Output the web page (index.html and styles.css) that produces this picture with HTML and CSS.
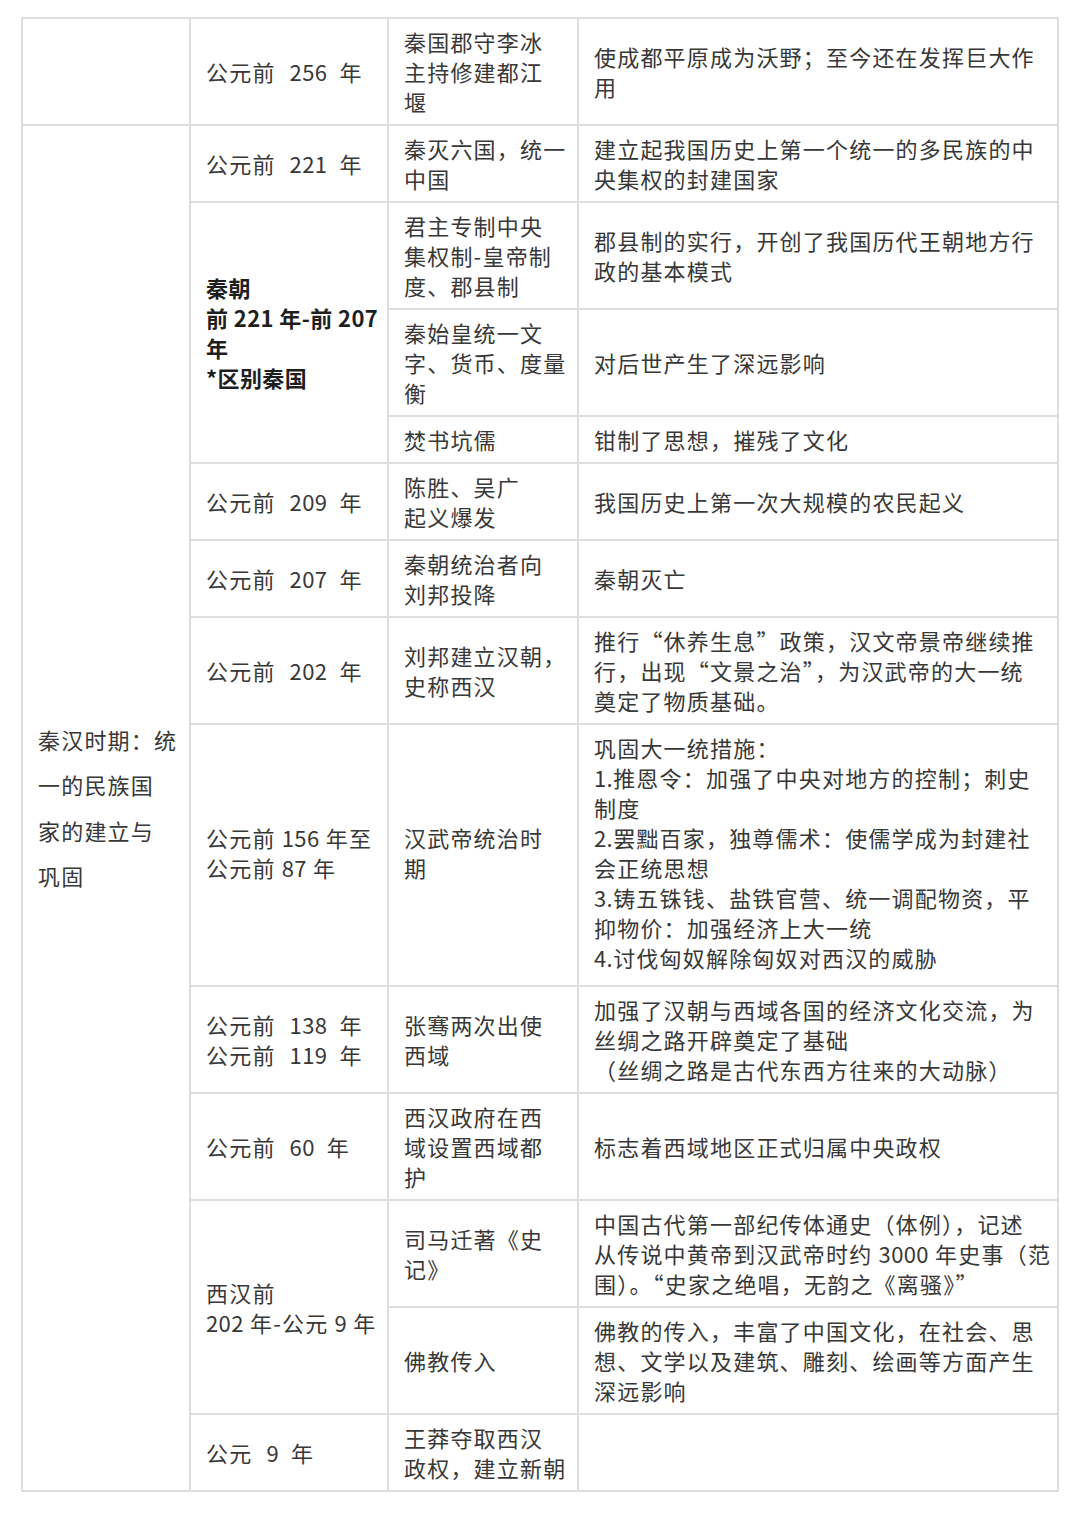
FILE: index.html
```html
<!DOCTYPE html>
<html lang="zh-CN">
<head>
<meta charset="utf-8">
<link rel="stylesheet" href="styles.css">
</head>
<body>
<table class="tbl">
  <colgroup>
    <col class="c1"><col class="c2"><col class="c3"><col class="c4">
  </colgroup>
  <tr>
    <td></td>
    <td>公元前<span class="num wide">256</span>年</td>
    <td>秦国郡守李冰<br>主持修建都江<br>堰</td>
    <td>使成都平原成为沃野；至今还在发挥巨大作<br>用</td>
  </tr>
  <tr>
    <td rowspan="14" class="period">秦汉时期：统<br>一的民族国<br>家的建立与<br>巩固</td>
    <td>公元前<span class="num wide">221</span>年</td>
    <td>秦灭六国，统一<br>中国</td>
    <td>建立起我国历史上第一个统一的多民族的中<br>央集权的封建国家</td>
  </tr>
  <tr>
    <td rowspan="3" class="dyn">秦朝<br>前 <span class="num">221</span> 年-前 <span class="num">207</span><br>年<br>*区别秦国</td>
    <td>君主专制中央<br>集权制-皇帝制<br>度、郡县制</td>
    <td>郡县制的实行，开创了我国历代王朝地方行<br>政的基本模式</td>
  </tr>
  <tr>
    <td>秦始皇统一文<br>字、货币、度量<br>衡</td>
    <td>对后世产生了深远影响</td>
  </tr>
  <tr>
    <td>焚书坑儒</td>
    <td>钳制了思想，摧残了文化</td>
  </tr>
  <tr>
    <td>公元前<span class="num wide">209</span>年</td>
    <td>陈胜、吴广<br>起义爆发</td>
    <td>我国历史上第一次大规模的农民起义</td>
  </tr>
  <tr>
    <td>公元前<span class="num wide">207</span>年</td>
    <td>秦朝统治者向<br>刘邦投降</td>
    <td>秦朝灭亡</td>
  </tr>
  <tr>
    <td>公元前<span class="num wide">202</span>年</td>
    <td>刘邦建立汉朝，<br>史称西汉</td>
    <td>推行“休养生息”政策，汉文帝景帝继续推<br>行，出现“文景之治”，为汉武帝的大一统<br>奠定了物质基础。</td>
  </tr>
  <tr class="tall">
    <td>公元前 <span class="num">156</span> 年至<br>公元前 <span class="num">87</span> 年</td>
    <td>汉武帝统治时<br>期</td>
    <td>巩固大一统措施：<br><span class="num">1.</span>推恩令：加强了中央对地方的控制；刺史<br>制度<br><span class="num">2.</span>罢黜百家，独尊儒术：使儒学成为封建社<br>会正统思想<br><span class="num">3.</span>铸五铢钱、盐铁官营、统一调配物资，平<br>抑物价：加强经济上大一统<br><span class="num">4.</span>讨伐匈奴解除匈奴对西汉的威胁</td>
  </tr>
  <tr>
    <td>公元前<span class="num wide">138</span>年<br>公元前<span class="num wide">119</span>年</td>
    <td>张骞两次出使<br>西域</td>
    <td>加强了汉朝与西域各国的经济文化交流，为<br>丝绸之路开辟奠定了基础<br>（丝绸之路是古代东西方往来的大动脉）</td>
  </tr>
  <tr>
    <td>公元前<span class="num wide">60</span>年</td>
    <td>西汉政府在西<br>域设置西域都<br>护</td>
    <td>标志着西域地区正式归属中央政权</td>
  </tr>
  <tr>
    <td rowspan="2">西汉前<br><span class="num">202</span> 年-公元 <span class="num">9</span> 年</td>
    <td>司马迁著《史<br>记》</td>
    <td>中国古代第一部纪传体通史（体例），记述<br>从传说中黄帝到汉武帝时约 <span class="num">3000</span> 年史事（范<br>围）。“史家之绝唱，无韵之《离骚》”</td>
  </tr>
  <tr>
    <td>佛教传入</td>
    <td>佛教的传入，丰富了中国文化，在社会、思<br>想、文学以及建筑、雕刻、绘画等方面产生<br>深远影响</td>
  </tr>
  <tr>
    <td>公元<span class="num wide">9</span>年</td>
    <td>王莽夺取西汉<br>政权，建立新朝</td>
    <td></td>
  </tr>
</table>
</body>
</html>
```

FILE: styles.css
```css
html, body {
  background: #ffffff;
}
body {
  margin: 17px 0 0 21px;
  font-family: "Noto Sans CJK SC", "Noto Sans", sans-serif;
  font-size: 22px;
  color: #383838;
}
.tbl {
  border-collapse: collapse;
  table-layout: fixed;
  width: 1036px;
}
.c1 { width: 168px; }
.c2 { width: 198px; }
.c3 { width: 190px; }
.c4 { width: 480px; }
.tbl td {
  border: 2px solid #dedede;
  padding: 7px 14px 8px 15px;
  line-height: 30px;
  letter-spacing: 1.2px;
  vertical-align: middle;
  white-space: nowrap;
  text-align: left;
}
.tbl td.period {
  line-height: 45.5px;
  padding-left: 15px;
}
.tbl td.dyn {
  font-weight: 700;
  color: #1e1e1e;
  letter-spacing: 0.4px;
}
.tbl tr.tall td {
  padding-bottom: 13px;
}
.num {
  letter-spacing: 0.4px;
}
.num.wide {
  margin: 0 12px 0 14px;
}
```
